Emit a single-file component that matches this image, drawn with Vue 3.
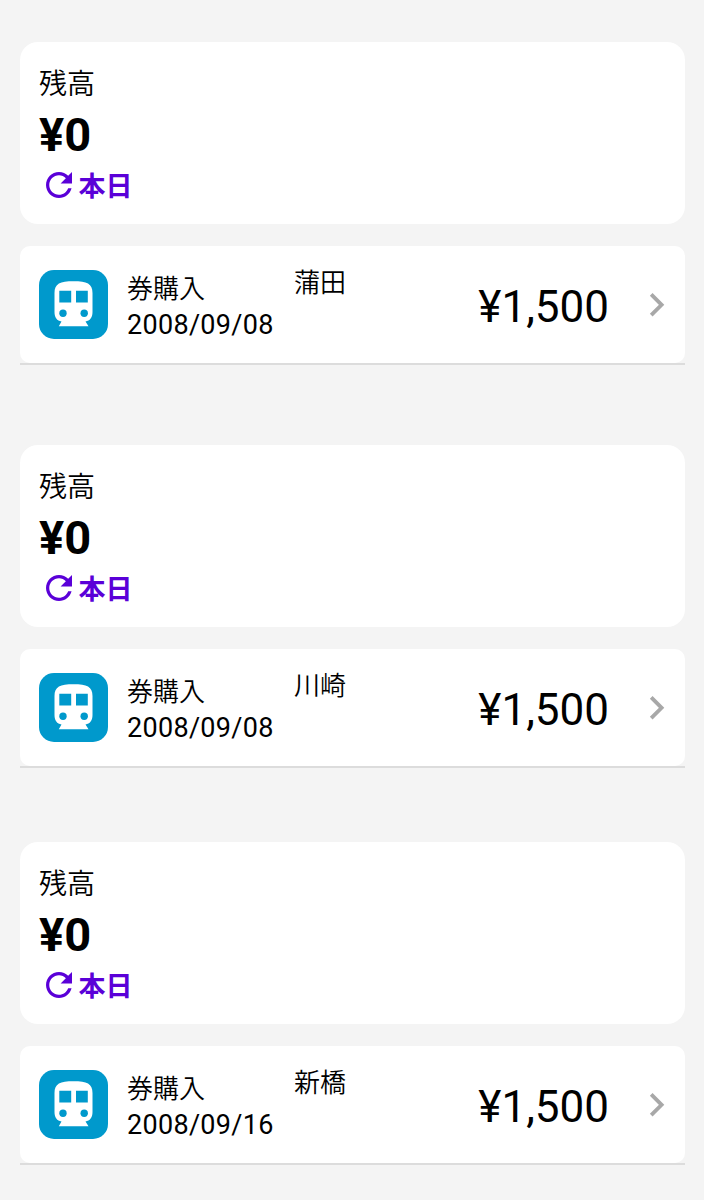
<template>
  <div class="HistoryList">
    <section v-for="ticket in tickets" :key="ticket.id" class="ticket">
      <div class="balance-card">
        <p class="balance-label">残高</p>
        <p class="balance-value">¥{{ ticket.balance }}</p>
        <div class="balance-update">
          <svg class="refresh-icon" viewBox="4 4 16 16">
            <path
              d="M17.65 6.35C16.2 4.9 14.21 4 12 4c-4.42 0-7.99 3.58-7.99 8s3.57 8 7.99 8c3.73 0 6.84-2.55 7.73-6h-2.08c-.82 2.33-3.04 4-5.65 4-3.31 0-6-2.69-6-6s2.69-6 6-6c1.66 0 3.14.69 4.22 1.78L13 11h7V4z"
              fill="#5a00d8"
            />
          </svg>
          <span>本日</span>
        </div>
      </div>

      <div class="record">
        <div class="record-body">
          <svg class="train-icon" viewBox="0 0 69 69">
            <rect width="69" height="69" rx="15" fill="#0099cc" />
            <path
              d="M15.5 23C15.5 13.5 21 11.2 34.5 11.2S53.5 13.5 53.5 23V42C53.5 47.5 51 50.8 46.5 51.5L49.5 56.3H19.8L22.5 51.5C18 50.8 15.5 47.5 15.5 42Z"
              fill="#fff"
            />
            <path d="M20.3 20.8H32.2V32.5H20.3ZM37 20.8H48.8V32.5H37Z" fill="#0099cc" />
            <circle cx="24" cy="43.3" r="3.7" fill="#0099cc" />
            <circle cx="45.2" cy="43.3" r="3.7" fill="#0099cc" />
          </svg>
          <div class="record-info">
            <p>{{ ticket.type }}</p>
            <p class="record-date">{{ ticket.date }}</p>
          </div>
          <p class="record-station">{{ ticket.station }}</p>
          <p class="record-price">¥{{ ticket.price.toLocaleString('en-US') }}</p>
          <svg class="arrow-icon" viewBox="0 0 16 26">
            <path d="M2.2 2.4L12.6 12.8L2.2 23.2" fill="none" stroke="#a8a8a8" stroke-width="3.8" />
          </svg>
        </div>
      </div>
    </section>
  </div>
</template>

<script setup>
import { ref } from 'vue';

const tickets = ref([
  { id: 1, balance: 0, type: '券購入', date: '2008/09/08', station: '蒲田', price: 1500 },
  { id: 2, balance: 0, type: '券購入', date: '2008/09/08', station: '川崎', price: 1500 },
  { id: 3, balance: 0, type: '券購入', date: '2008/09/16', station: '新橋', price: 1500 },
]);
</script>

<style>
body {
  margin: 0;
  background: #f4f4f4;
}
</style>

<style scoped>
.HistoryList {
  box-sizing: border-box;
  height: 1200px;
  padding: 42px 19.5px 0;
  overflow: hidden;
  background: #f4f4f4;
  color: #000;
  font-family: Roboto, "Noto Sans CJK JP", sans-serif;
}
p {
  margin: 0;
  white-space: nowrap;
}
.ticket {
  margin-bottom: 80px;
}
.ticket:nth-child(2) {
  margin-bottom: 74px;
}
.balance-card {
  box-sizing: border-box;
  height: 182px;
  padding: 24px 19.5px 0;
  border-radius: 18px;
  background: #fff;
}
.balance-label {
  font-size: 28px;
  font-weight: 350;
  line-height: 38px;
}
.balance-value {
  font-size: 47px;
  font-weight: 700;
  line-height: 61px;
}
.balance-update {
  display: flex;
  align-items: center;
  gap: 7px;
  height: 40px;
  padding-left: 6.5px;
  color: #5a00d8;
  font-size: 27px;
  font-weight: 700;
}
.balance-update span {
  padding-top: 4px;
  line-height: 36px;
}
.refresh-icon {
  width: 26px;
  height: 26px;
}
.record {
  margin-top: 22px;
  border-bottom: 2px solid #dcdcdc;
}
.record-body {
  box-sizing: border-box;
  display: flex;
  align-items: flex-start;
  height: 117px;
  padding: 24px 19.5px 0;
  border-radius: 10px;
  background: #fff;
}
.train-icon {
  width: 69px;
  height: 69px;
  flex-shrink: 0;
}
.record-info {
  width: 167px;
  margin-left: 19px;
  padding-top: 1px;
  font-size: 26px;
  font-weight: 350;
  line-height: 37px;
}
.record-date {
  font-size: 27px;
  font-weight: 400;
  line-height: 35px;
  letter-spacing: 0.3px;
}
.record-station {
  flex: 1;
  margin-top: -5px;
  font-size: 26px;
  font-weight: 350;
  line-height: 37px;
}
.record-price {
  margin-top: 7px;
  font-size: 44px;
  line-height: 60px;
}
.arrow-icon {
  width: 16px;
  height: 26px;
  margin: 22px 0 0 40px;
}
</style>
